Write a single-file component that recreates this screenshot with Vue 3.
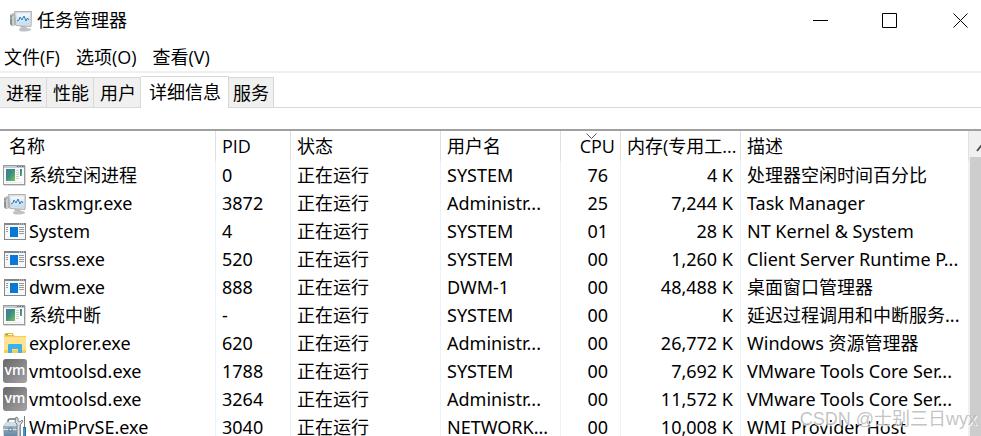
<template>
  <div class="task-manager">
    <!-- Общие символы для иконок процессов -->
    <svg class="sprite" aria-hidden="true">
      <defs>
        <linearGradient id="green" x1="0" y1="0" x2="1" y2="1">
          <stop offset="0" stop-color="#3f78b4" />
          <stop offset="0.45" stop-color="#3b8e7a" />
          <stop offset="1" stop-color="#78c266" />
        </linearGradient>
        <linearGradient id="grey" x1="0" y1="0" x2="1" y2="1">
          <stop offset="0" stop-color="#68686a" />
          <stop offset="1" stop-color="#a4a4a6" />
        </linearGradient>
        <linearGradient id="screen" x1="0" y1="0" x2="0" y2="1">
          <stop offset="0" stop-color="#f4fbff" />
          <stop offset="1" stop-color="#bddcf2" />
        </linearGradient>
        <linearGradient id="steel" x1="0" y1="0" x2="0" y2="1">
          <stop offset="0" stop-color="#b3c5d3" />
          <stop offset="1" stop-color="#5c7e99" />
        </linearGradient>
      </defs>

      <symbol id="icon-idle" viewBox="0 0 24 24">
        <rect x="1" y="3" width="22" height="20" fill="#d9d9d9" />
        <rect x="0.5" y="2.5" width="21" height="19" fill="#fafafa" stroke="#9a9a9a" />
        <rect x="1" y="3" width="20" height="2" fill="#c3cad4" />
        <path d="M14 3.5h1.5M16.500 3.500h1.500M19 3.500h1.500" stroke="#596474" />
        <rect x="3" y="6" width="9" height="12" fill="url(#green)" />
        <path d="M13 7.500h3M13 9.500h3M13 11.500h3M13 13.500h3M13 15.500h3" stroke="#cfcfcf" />
        <rect x="17" y="6" width="2" height="7" fill="url(#green)" />
        <path d="M3 19.500h16" stroke="#ececec" />
      </symbol>

      <symbol id="icon-monitor" viewBox="0 0 24 24">
        <path d="M1 7l3-2 3 1v11l-4 1-2-2z" fill="#b3b6b8" />
        <path d="M1 7l2 1v10l-2-2z" fill="#8a8f92" />
        <path d="M4 8v9" stroke="#e2e4e5" />
        <circle cx="2" cy="10" r="1" fill="#8fc579" />
        <path d="M11 18h6l1 2q4 0 4 1.500T16 23.500t-6-2q0-1.500 2-1.500z" fill="#bfc2c4" />
        <path d="M5.500 3.500l17 0-.5 15L7 17.500z" fill="#dedfe0" stroke="#b0b3b6" />
        <path d="M7.500 5.500h13.500l-.5 11L8.500 15.500z" fill="url(#screen)" />
        <path d="M8 13l2-1 1-3 2 3 2-4 2 5 1.500-3 1.500 2" fill="none" stroke="#327ab5" />
      </symbol>

      <symbol id="icon-app" viewBox="0 0 24 24">
        <rect x="1.500" y="4.500" width="21" height="16" fill="#f7f7f7" stroke="#858a8f" />
        <rect x="1" y="4" width="22" height="2" fill="#7e858b" />
        <path d="M16 5h1M18 5h1M20 5h1" stroke="#dfe2e4" />
        <rect x="7" y="8" width="8" height="10" fill="#0878d7" />
        <path d="M3 8.500h2M3 10.500h2M3 12.500h2M16 8.500h5M16 10.500h5M16 12.500h5M16 14.500h5" stroke="#969b9f" />
      </symbol>

      <symbol id="icon-explorer" viewBox="0 0 24 24">
        <path d="M1 3h9l2 2h11v17H1z" fill="#f7cd55" />
        <path d="M2 2h8v3H2z" fill="#efbd34" />
        <path d="M3 3h2v1H3z" fill="#43a7d8" />
        <path d="M5 3h4v1H5z" fill="#fff" />
        <path d="M1 6h22v13H1z" fill="#ffe390" />
        <path d="M5 22v-8q0-1 1-1h12q1 0 1 1v8h-4v-4H9v4z" fill="#3db2e7" />
      </symbol>

      <symbol id="icon-vm" viewBox="0 0 24 24">
        <rect width="24" height="24" rx="3" fill="url(#grey)" />
        <text class="vm-text" x="12" y="16" text-anchor="middle" fill="#fff">vm</text>
      </symbol>

      <symbol id="icon-wmi" viewBox="0 0 24 24">
        <path d="M5 8V6q0-2 2-2h5q2 0 2 2v2" fill="none" stroke="#65727c" stroke-width="1.500" />
        <path d="M0 11l3-4h11l4 3v11l-3 2H1z" fill="url(#steel)" />
        <path d="M0 11l3-4h12l-1 4z" fill="#d2dde4" />
        <path d="M0 14.500h15" stroke="#dce7ed" />
        <path d="M6 13h3v3H6z" fill="#e8edf0" stroke="#60717d" />
        <path d="M13 2l2 1v3l2 1 2-2 1 1-2 3-1 1v13h-3V9l-2-2z" fill="#d7dde0" stroke="#7c878e" />
        <path d="M21.500 1v11" stroke="#747e85" />
        <path d="M20 12h3v11h-3z" fill="#276ea5" />
        <path d="M21 13v8" stroke="#73b4dc" />
      </symbol>
    </svg>

    <header class="titlebar">
      <svg class="icon"><use href="#icon-monitor" /></svg>
      <h1>任务管理器</h1>
      <div class="window-buttons">
        <button type="button" aria-label="最小化">
          <svg viewBox="0 0 15 15"><path d="M0 7.500h15" /></svg>
        </button>
        <button type="button" aria-label="最大化">
          <svg viewBox="0 0 15 15"><path d="M.5.5h14v14H.5z" /></svg>
        </button>
        <button type="button" aria-label="关闭">
          <svg viewBox="0 0 15 15"><path d="M.5.5l14 14M14.500.5l-14 14" /></svg>
        </button>
      </div>
    </header>

    <nav class="menu">
      <button v-for="item in menu" :key="item" type="button">{{ item }}</button>
    </nav>

    <div class="tabs" role="tablist">
      <button
        v-for="tab in tabs"
        :key="tab"
        type="button"
        role="tab"
        :class="{ active: tab === activeTab }"
        :aria-selected="tab === activeTab"
        @click="activeTab = tab"
      >{{ tab }}</button>
    </div>

    <main class="details">
      <div class="table-wrap">
        <table>
          <colgroup>
            <col class="c-name"><col class="c-pid"><col class="c-status"><col class="c-user">
            <col class="c-cpu"><col class="c-memory"><col>
          </colgroup>
          <thead>
            <tr>
              <th>名称</th>
              <th>PID</th>
              <th>状态</th>
              <th>用户名</th>
              <th class="cpu-head">
                CPU
                <svg class="sort" viewBox="0 0 11 6"><path d="M.5.5l5 5 5-5" /></svg>
              </th>
              <th>内存(专用工...</th>
              <th>描述</th>
            </tr>
          </thead>
          <tbody>
            <tr v-for="p in processes" :key="p.name + p.pid">
              <td>
                <div class="process">
                  <svg class="icon"><use :href="'#icon-' + p.icon" /></svg>
                  <span>{{ p.name }}</span>
                </div>
              </td>
              <td>{{ p.pid }}</td>
              <td>正在运行</td>
              <td>{{ p.user }}</td>
              <td class="cpu">{{ p.cpu }}</td>
              <td class="memory">{{ p.memory }}</td>
              <td>{{ p.description }}</td>
            </tr>
          </tbody>
        </table>
      </div>
      <div class="scrollbar">
        <button type="button" aria-label="向上滚动">
          <svg viewBox="0 0 10 8"><path d="M1 7l4-5 4 5" /></svg>
        </button>
        <div class="thumb"></div>
      </div>
    </main>

    <div class="watermark">CSDN @士别三日wyx</div>
  </div>
</template>

<script setup>
import { ref } from 'vue'

const menu = ['文件(F)', '选项(O)', '查看(V)']
const tabs = ['进程', '性能', '用户', '详细信息', '服务']
const activeTab = ref('详细信息')

const processes = [
  { icon: 'idle', name: '系统空闲进程', pid: '0', user: 'SYSTEM', cpu: '76', memory: '4 K', description: '处理器空闲时间百分比' },
  { icon: 'monitor', name: 'Taskmgr.exe', pid: '3872', user: 'Administr...', cpu: '25', memory: '7,244 K', description: 'Task Manager' },
  { icon: 'app', name: 'System', pid: '4', user: 'SYSTEM', cpu: '01', memory: '28 K', description: 'NT Kernel & System' },
  { icon: 'app', name: 'csrss.exe', pid: '520', user: 'SYSTEM', cpu: '00', memory: '1,260 K', description: 'Client Server Runtime P...' },
  { icon: 'app', name: 'dwm.exe', pid: '888', user: 'DWM-1', cpu: '00', memory: '48,488 K', description: '桌面窗口管理器' },
  { icon: 'idle', name: '系统中断', pid: '-', user: 'SYSTEM', cpu: '00', memory: 'K', description: '延迟过程调用和中断服务...' },
  { icon: 'explorer', name: 'explorer.exe', pid: '620', user: 'Administr...', cpu: '00', memory: '26,772 K', description: 'Windows 资源管理器' },
  { icon: 'vm', name: 'vmtoolsd.exe', pid: '1788', user: 'SYSTEM', cpu: '00', memory: '7,692 K', description: 'VMware Tools Core Ser...' },
  { icon: 'vm', name: 'vmtoolsd.exe', pid: '3264', user: 'Administr...', cpu: '00', memory: '11,572 K', description: 'VMware Tools Core Ser...' },
  { icon: 'wmi', name: 'WmiPrvSE.exe', pid: '3040', user: 'NETWORK...', cpu: '00', memory: '10,008 K', description: 'WMI Provider Host' },
]
</script>

<style>
body {
  margin: 0;
  background: #fff;
}
</style>

<style scoped>
* {
  box-sizing: border-box;
}

.task-manager {
  position: relative;
  display: flex;
  flex-direction: column;
  height: 100vh;
  overflow: hidden;
  background: #fff;
  color: #000;
  font: 18px/28px "Noto Sans", "Noto Sans CJK SC", sans-serif;
}

button {
  padding: 0;
  border: 0;
  background: none;
  color: inherit;
  font: inherit;
}

.sprite {
  position: absolute;
  width: 0;
  height: 0;
}

.icon {
  flex: none;
  width: 24px;
  height: 24px;
}

.vm-text {
  font: 600 14px "Open Sans", sans-serif;
}

.titlebar {
  display: flex;
  flex: none;
  align-items: center;
  height: 40px;
  padding-left: 9px;
}

h1 {
  margin: 0 0 0 4px;
  font-size: 18px;
  font-weight: 400;
}

.window-buttons {
  display: flex;
  align-self: stretch;
  margin-left: auto;
}

.window-buttons button {
  display: flex;
  align-items: center;
  justify-content: center;
  width: 69px;
}

.window-buttons button:last-child {
  justify-content: flex-end;
  width: 57px;
  padding-right: 13px;
}

.window-buttons svg {
  width: 15px;
  height: 15px;
  fill: none;
  stroke: #000;
}

.menu {
  display: flex;
  flex: none;
  gap: 16px;
  height: 33px;
  padding: 2px 0 0 4px;
  border-bottom: 2px solid #f0f0f0;
  font-family: "Open Sans", "Noto Sans CJK SC", sans-serif;
}

.tabs {
  display: flex;
  flex: none;
  align-items: flex-end;
  height: 35px;
  border-bottom: 1px solid #d9d9d9;
}

.tabs button {
  height: 30px;
  padding: 0 4px 0 6px;
  border: 1px solid #d9d9d9;
  border-left: 0;
  border-bottom: 0;
  background: #f0f0f0;
}

.tabs .active {
  height: 32px;
  margin-bottom: -1px;
  padding: 0 7px 2px 8px;
  background: #fff;
}

.tabs .active + button {
  padding-left: 4px;
}

.details {
  display: flex;
  flex: 1;
  min-height: 0;
  margin-top: 21px;
  border-top: 2px solid #a0a0a0;
}

.table-wrap {
  flex: 1;
  min-width: 0;
  overflow: hidden;
}

table {
  width: 100%;
  table-layout: fixed;
  border-collapse: separate;
  border-spacing: 0;
}

.c-name {
  width: 216px;
}

.c-pid {
  width: 75px;
}

.c-status {
  width: 150px;
}

.c-user,
.c-memory {
  width: 120px;
}

.c-cpu {
  width: 60px;
}

th,
td {
  height: 28px;
  padding: 0 0 0 6px;
  overflow: hidden;
  border-right: 1px solid #e8f2fc;
  font-weight: 400;
  text-align: left;
  white-space: nowrap;
}

th {
  height: 30px;
  border-right-color: #e0e0e0;
  font-family: "Open Sans", "Noto Sans CJK SC", sans-serif;
}

th:first-child {
  padding-left: 9px;
}

td:first-child {
  padding-left: 3px;
}

.process {
  display: flex;
  align-items: center;
  gap: 2px;
}

.cpu-head {
  position: relative;
  padding-right: 5px;
  text-align: right;
}

/* Стрелка сортировки лежит поверх заголовка */
.sort {
  position: absolute;
  top: 2px;
  left: 25px;
  width: 11px;
  height: 6px;
  fill: none;
  stroke: #555;
}

.cpu {
  padding-right: 12px;
  text-align: right;
}

.memory {
  padding-right: 7px;
  text-align: right;
}

.scrollbar {
  display: flex;
  flex: none;
  flex-direction: column;
  width: 12px;
  overflow: hidden;
  background: #f0f0f0;
}

.scrollbar button {
  height: 26px;
  padding-left: 7px;
  text-align: left;
}

.scrollbar svg {
  width: 10px;
  height: 8px;
  fill: none;
  stroke: #505050;
  stroke-width: 2;
}

.thumb {
  flex: 1;
  margin-left: 1px;
  background: #cdcdcd;
}

.watermark {
  position: absolute;
  right: 4px;
  bottom: 3px;
  color: rgba(170, 170, 170, 0.7);
  font: 18px/28px "Liberation Sans", "Noto Sans CJK SC", sans-serif;
  text-shadow: 1px 1px 1px #fff;
  pointer-events: none;
}
</style>
